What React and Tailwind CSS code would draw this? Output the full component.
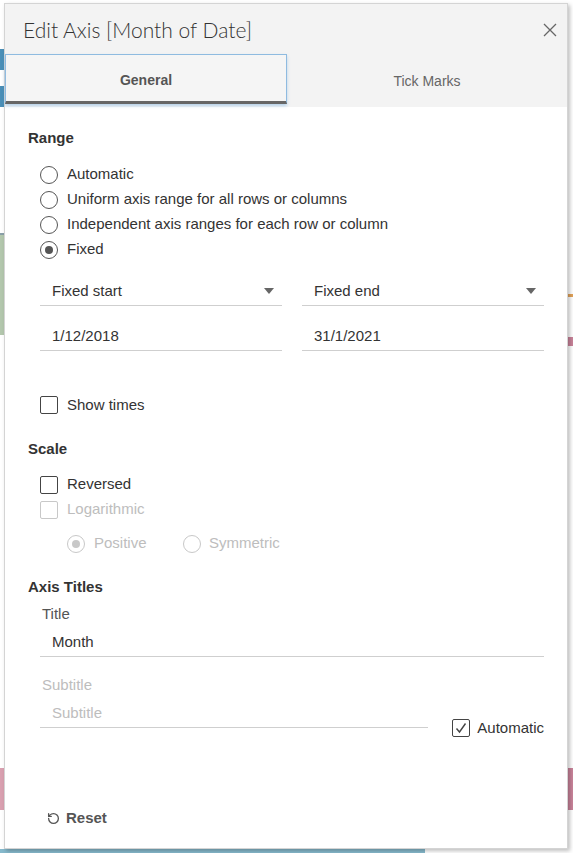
import { RotateCcw } from 'lucide-react';

const Radio = ({ checked, disabled }) => (
  <span
    className={`w-[18px] h-[18px] rounded-full border flex items-center justify-center shrink-0 bg-white ${
      disabled ? 'border-[#c8c8c8]' : 'border-[#555]'
    }`}
  >
    {checked && (
      <span className={`w-[8px] h-[8px] rounded-full ${disabled ? 'bg-[#c8c8c8]' : 'bg-[#555]'}`} />
    )}
  </span>
);

const Checkbox = ({ checked, disabled }) => (
  <span
    className={`w-[18px] h-[18px] border rounded-[2px] flex items-center justify-center shrink-0 bg-white ${
      disabled ? 'border-[#c8c8c8]' : 'border-[#444]'
    }`}
  >
    {checked && (
      <svg width="12" height="12" viewBox="0 0 12 12">
        <path d="M1.5 6.5 L4.5 10 L10.5 1.5" fill="none" stroke="#444" strokeWidth="1.4" />
      </svg>
    )}
  </span>
);

const Caret = () => (
  <svg width="10" height="6" viewBox="0 0 10 6" className="shrink-0 mb-[5px]">
    <path d="M0 0h10L5 6z" fill="#666" />
  </svg>
);

const Dropdown = ({ label }) => (
  <div className="flex-1 h-[32px] border-b border-[#cfcfcf] flex items-end justify-between pl-[12px] pr-[8px] pb-[6px] text-[15px] leading-[17px] text-[#333]">
    <span>{label}</span>
    <Caret />
  </div>
);

const TextField = ({ value, className = '', muted }) => (
  <div
    className={`h-[30px] border-b border-[#cfcfcf] flex items-end pb-[6px] pl-[12px] text-[15px] leading-[17px] ${
      muted ? 'text-[#bdbdbd]' : 'text-[#333]'
    } ${className}`}
  >
    {value}
  </div>
);

const Heading = ({ children, className = '' }) => (
  <div className={`h-[20px] flex items-center text-[15px] font-bold text-[#333] ${className}`}>{children}</div>
);

const App = () => {
  const rangeOptions = [
    { label: 'Automatic', checked: false },
    { label: 'Uniform axis range for all rows or columns', checked: false },
    { label: 'Independent axis ranges for each row or column', checked: false },
    { label: 'Fixed', checked: true },
  ];

  return (
    <div
      className="relative w-[573px] h-[853px] bg-white overflow-hidden"
      style={{ fontFamily: '"Liberation Sans", Arial, sans-serif' }}
    >
      {/* chart bits peeking out behind the dialog */}
      <div className="absolute left-0 top-[49px] w-[5px] h-[21px] bg-[#4a8fb8]" />
      <div className="absolute left-0 top-[86px] w-[5px] h-[21px] bg-[#4a8fb8]" />
      <div className="absolute left-0 top-[233px] w-[5px] h-[102px] bg-[#b3c7ad] border-t-2 border-[#8aa0a8]" />
      <div className="absolute left-0 top-[768px] w-[5px] h-[42px] bg-[#d9a0b0]" />
      <div className="absolute right-0 top-[294px] w-[5px] h-[3px] bg-[#e2a35a]" />
      <div className="absolute right-0 top-[337px] w-[5px] h-[9px] bg-[#c9839a]" />
      <div className="absolute right-0 top-[768px] w-[5px] h-[42px] bg-[#c9839a]" />
      <div className="absolute left-0 bottom-0 w-[425px] h-[4px] bg-[#86b9cc]" />

      <div className="relative ml-[4px] mt-[3px] w-[564px] h-[846px] bg-white border border-[#d4d4d4] shadow-[2px_2px_4px_rgba(0,0,0,0.25)] flex flex-col">
        {/* header */}
        <div className="bg-[#f3f3f3]">
          <div className="flex items-center justify-between pl-[18px] pr-[10px] pt-[1px] h-[50px]">
            <h1
              className="text-[21px] font-light text-[#333] leading-[28px]"
              style={{ fontFamily: 'Lato, "Open Sans", sans-serif' }}
            >
              Edit Axis [Month of Date]
            </h1>
            <svg width="14" height="14" viewBox="0 0 14 14">
              <path d="M1 1L13 13M13 1L1 13" stroke="#666" strokeWidth="1.3" />
            </svg>
          </div>
          <div className="flex h-[53px]">
            <div className="w-[282px] h-[50px] pt-[4px] bg-[#f5f5f5] border border-[#8fbbe0] border-b-[3px] border-b-[#666] shadow-[0_2px_3px_rgba(110,170,225,0.45)] flex items-center justify-center text-[14px] font-bold text-[#555]">
              General
            </div>
            <div className="flex-1 h-[50px] pt-[4px] flex items-center justify-center text-[14px] text-[#666]">
              Tick Marks
            </div>
          </div>
        </div>

        {/* body */}
        <div className="flex-1 pl-[23px] pr-[23px] pt-[21px]">
          <Heading>Range</Heading>
          <div className="mt-[14px] ml-[12px]">
            {rangeOptions.map((opt) => (
              <div key={opt.label} className="h-[25px] flex items-center gap-[9px] text-[15px] text-[#333]">
                <Radio checked={opt.checked} />
                <span>{opt.label}</span>
              </div>
            ))}
          </div>

          <div className="ml-[12px] mt-[12px] flex gap-[20px]">
            <Dropdown label="Fixed start" />
            <Dropdown label="Fixed end" />
          </div>
          <div className="ml-[12px] mt-[13px] flex gap-[20px]">
            <TextField value="1/12/2018" className="flex-1 h-[32px]" />
            <TextField value="31/1/2021" className="flex-1 h-[32px]" />
          </div>

          <div className="ml-[12px] mt-[45px] h-[18px] flex items-center gap-[9px] text-[15px] text-[#333]">
            <Checkbox />
            <span>Show times</span>
          </div>

          <Heading className="mt-[25px]">Scale</Heading>
          <div className="mt-[13px] ml-[12px]">
            <div className="h-[25px] flex items-center gap-[9px] text-[15px] text-[#333]">
              <Checkbox />
              <span>Reversed</span>
            </div>
            <div className="h-[25px] flex items-center gap-[9px] text-[15px] text-[#bdbdbd]">
              <Checkbox disabled />
              <span>Logarithmic</span>
            </div>
            <div className="mt-[9px] ml-[27px] h-[25px] flex items-center text-[15px] text-[#bdbdbd]">
              <div className="flex items-center gap-[9px] w-[116px]">
                <Radio checked disabled />
                <span>Positive</span>
              </div>
              <div className="flex items-center gap-[8px]">
                <Radio disabled />
                <span>Symmetric</span>
              </div>
            </div>
          </div>

          <Heading className="mt-[21px]">Axis Titles</Heading>
          <div className="mt-[7px] ml-[14px] h-[20px] flex items-center text-[15px] text-[#555]">Title</div>
          <TextField value="Month" className="ml-[12px] mt-[3px]" />
          <div className="mt-[18px] ml-[14px] h-[20px] flex items-center text-[15px] text-[#bdbdbd]">Subtitle</div>
          <div className="ml-[12px] mt-[3px] flex items-start gap-[24px]">
            <TextField value="Subtitle" muted className="w-[390px]" />
            <div className="mt-[19px] flex items-center gap-[7px] text-[15px] text-[#333]">
              <Checkbox checked />
              <span>Automatic</span>
            </div>
          </div>
        </div>

        {/* footer */}
        <div className="pl-[42px] pb-[19px] h-[40px] flex items-center gap-[6px] text-[15px] font-bold text-[#555]">
          <RotateCcw size={13} strokeWidth={2.4} color="#555" />
          <span>Reset</span>
        </div>
      </div>
    </div>
  );
};

export default App;
